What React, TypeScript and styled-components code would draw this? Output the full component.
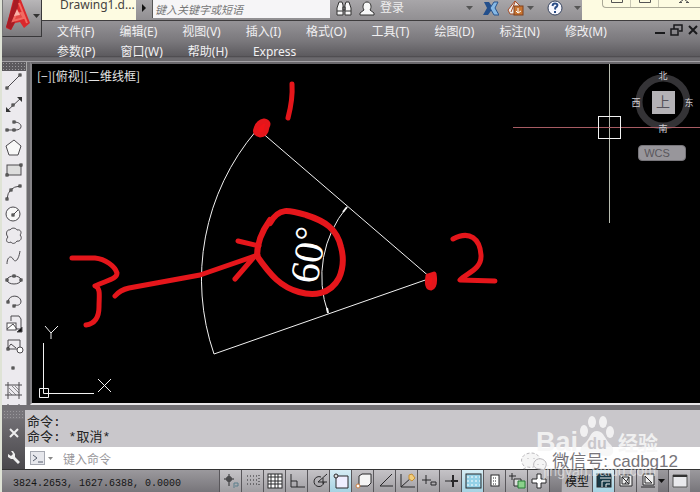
import React from "react";
import styled, { createGlobalStyle, css } from "styled-components";

const uiFont = `"Noto Sans", "Noto Sans CJK SC", sans-serif`;
const cjkFont = `"Noto Sans CJK SC", "Noto Sans", sans-serif`;

const GlobalStyle = createGlobalStyle`
  * { box-sizing: border-box; }
  body { margin: 0; background: #000; font-family: ${uiFont}; font-size: 12px; }
  button, input { font: inherit; color: inherit; margin: 0; padding: 0; border: 0; background: none; }
  svg { display: block; }
`;

const Window = styled.div`
  display: flex;
  flex-direction: column;
  height: 100vh;
  overflow: hidden;
  position: relative;
  background: #6d6b6f;
  border-left: 2px solid #dfe3d6;
`;

const Header = styled.header`
  display: grid;
  grid-template-columns: 40px 1fr;
  grid-template-rows: 21px 41px;
  flex: none;
`;

const AppButton = styled.button`
  grid-column: 1;
  grid-row: 1 / 3;
  align-self: start;
  height: 37px;
  z-index: 1;
  background: linear-gradient(#b8b6b8, #7b797c);
  border: 1px solid #39383a;
  border-top: 0;
  border-left-color: #777;
`;

const TitleBar = styled.div`
  grid-column: 2;
  grid-row: 1;
  display: flex;
  align-items: stretch;
  min-width: 0;
  background: linear-gradient(#a8a6a9, #918f92);
  border-bottom: 1px solid #3e3c3e;
`;

const FileTab = styled.div`
  width: 94px;
  flex: none;
  padding-left: 18px;
  background: #fdfbe1;
  color: #45423f;
  line-height: 9px;
  font-size: 12px;
  white-space: nowrap;
`;

const TitleButton = styled.button<{ $w: number }>`
  width: ${(p) => p.$w}px;
  flex: none;
  display: flex;
  align-items: center;
  justify-content: center;
  padding-bottom: 4px;
`;

const Search = styled.input`
  width: 178px;
  height: 18px;
  flex: none;
  padding: 0 2px;
  background: #f6f5f7;
  border-left: 1px solid #555;
  font-family: ${cjkFont};
  font-style: italic;
  font-size: 11px;
  &::placeholder { color: #777; opacity: 1; }
`;

const SignIn = styled.button`
  display: flex;
  align-items: center;
  gap: 5px;
  padding: 0 0 4px 2px;
  color: #eee;
  font-size: 12px;
  line-height: 16px;
  white-space: nowrap;
`;

const Fill = styled.div`
  flex: 1;
`;

const FrameCorner = styled.div`
  width: 118px;
  flex: none;
  padding-left: 20px;
  background: #fdfbe1;
`;

const FrameButtons = styled.div`
  display: flex;
  height: 8px;
  border: 1px solid #aaa896;
  border-top: 0;
  border-right: 0;
  border-radius: 0 0 0 4px;
`;

const FrameButton = styled.button<{ $wide?: boolean }>`
  width: ${(p) => (p.$wide ? 50 : 28)}px;
  flex: none;
  display: flex;
  justify-content: center;
  border-right: 1px solid #c9c7b4;
`;

const MenuBar = styled.div`
  grid-column: 1 / 3;
  grid-row: 2;
  display: flex;
  padding-left: 55px;
  background: linear-gradient(#959397, #7a787c 50%, #5c5a5e 88%, #4c4a4d 89%, #6b696d 92%);
  border-bottom: 1px solid #a4a2a6;
`;

const Menus = styled.nav`
  flex: 1;
  display: flex;
  flex-wrap: wrap;
  align-content: flex-start;
  column-gap: 25px;
`;

const MenuItem = styled.button`
  height: 20px;
  color: #f1f0f2;
  white-space: nowrap;
`;

const DocButtons = styled.div`
  display: flex;
  align-items: flex-start;
  padding-top: 3px;
  width: 46px;
  flex: none;
`;

const DocButton = styled.button`
  width: 16px;
  flex: none;
`;

const Work = styled.div`
  display: flex;
  flex: 1;
  min-height: 0;
`;

const ToolColumn = styled.div`
  width: 25px;
  flex: none;
  overflow: hidden;
  background: #eceaee;
  border-right: 1px solid #aaa;
`;

const Grip = styled.div`
  height: 9px;
  background-color: #5c5a5e;
  background-image: radial-gradient(#9a989c 1px, transparent 1px);
  background-size: 3px 3px;
`;

const Tool = styled.button`
  display: block;
  width: 100%;
  height: 22px;
`;

const Canvas = styled.main`
  flex: 1;
  position: relative;
  margin-left: 3px;
  background: #000;
  border: 2px solid #e8e6e8;
  border-top-color: #6a686c;
  border-left-color: #858387;
  border-right: 0;
  overflow: hidden;
`;

const Drawing = styled.svg`
  position: absolute;
  left: 0;
  top: 0;
`;

const ViewLabel = styled.div`
  position: absolute;
  left: 5px;
  top: 3px;
  color: #e4e4e4;
  font-family: ${cjkFont};
  font-size: 12px;
  line-height: 18px;
`;

const ViewCube = styled.div`
  position: absolute;
  right: 5px;
  top: 4px;
  width: 64px;
`;

const WcsButton = styled.button`
  display: block;
  width: 48px;
  height: 16px;
  margin: 11px 0 0 7px;
  padding-right: 10px;
  border-radius: 4px;
  border: 1px solid #77757a;
  background: #98969b;
  color: #58565c;
  font-family: "Liberation Sans", sans-serif;
  font-size: 11px;
  line-height: 12px;
`;

const Console = styled.section`
  display: flex;
  flex: none;
  height: 65px;
  border-top: 5px solid #737175;
  border-bottom: 1px solid #333;
`;

const ConsoleSide = styled.div`
  width: 23px;
  flex: none;
  display: flex;
  flex-direction: column;
  align-items: center;
  background: linear-gradient(#77757a, #4a484c);
`;

const SideButton = styled.button`
  height: 24px;
`;

const SideGrip = styled(Grip)`
  width: 21px;
  margin-bottom: 2px;
  background-color: #77757a;
`;

const ConsoleBody = styled.div`
  flex: 1;
  display: flex;
  flex-direction: column;
  background: #c9c7cb;
`;

const History = styled.div`
  flex: 1;
  padding: 5px 2px 0;
  color: #222;
  font-family: "Liberation Mono", "Noto Sans CJK SC", monospace;
  font-size: 13px;
  line-height: 15px;
`;

const HistoryLine = styled.div`
  height: 15px;
  white-space: pre;
`;

const Prompt = styled.label`
  display: flex;
  align-items: center;
  height: 22px;
  padding-left: 5px;
  gap: 9px;
  background: #fff;
`;

const CommandInput = styled.input`
  flex: 1;
  font-family: ${cjkFont};
  font-size: 12px;
  &::placeholder { color: #99979b; opacity: 1; }
`;

const StatusBar = styled.footer`
  display: flex;
  flex: none;
  height: 22px;
  background: linear-gradient(#9b999d, #77757a);
`;

const Coordinates = styled.div`
  width: 217px;
  flex: none;
  padding: 5px 0 0 11px;
  color: #151515;
  font-family: "Liberation Mono", monospace;
  font-size: 10px;
  line-height: 18px;
  white-space: pre;
`;

const Toggle = styled.button<{ $on?: boolean }>`
  width: 22px;
  flex: none;
  display: flex;
  justify-content: center;
  align-items: center;
  background: linear-gradient(#c5c3c7, #a09ea2);
  border-left: 1px solid #59575b;
  ${(p) => p.$on && css`background: linear-gradient(#d6edf5, #a6d2e2);`}
`;

const ModelGroup = styled.div`
  display: flex;
  flex: 1;
  border-left: 1px solid #59575b;
  padding-left: 11px;
`;

const ModelButton = styled.button`
  width: 31px;
  background: #b3b1b5;
  border-left: 1px solid #8a888c;
  color: #111;
  font-family: ${cjkFont};
  font-size: 12px;
  line-height: 20px;
`;

const CaretButton = styled.button`
  width: 10px;
`;

const Brand = styled.div`
  position: absolute;
  right: 42px;
  bottom: 38px;
  display: flex;
  align-items: flex-end;
  color: rgba(246, 246, 246, 0.88);
  pointer-events: none;
`;

const BrandLatin = styled.span`
  font-family: "Liberation Sans", sans-serif;
  font-size: 27px;
  font-weight: bold;
  line-height: 24px;
`;

const BrandPaw = styled.svg`
  margin-bottom: -4px;
`;

const BrandCjk = styled.span`
  padding-left: 3px;
  font-family: ${cjkFont};
  font-size: 20px;
  font-weight: bold;
  line-height: 22px;
`;

const BrandSite = styled.span`
  position: absolute;
  right: 44px;
  bottom: 13px;
  font-family: "Liberation Sans", sans-serif;
  font-size: 14px;
  line-height: 16px;
  color: rgba(235, 235, 235, 0.65);
  pointer-events: none;
`;

const Contact = styled.div`
  position: absolute;
  right: 22px;
  bottom: 20px;
  display: flex;
  align-items: center;
  gap: 5px;
  color: #77757a;
  font-family: "Liberation Sans", "Noto Sans CJK SC", sans-serif;
  font-size: 17px;
  line-height: 20px;
  text-shadow: -1px -1px #fff;
  pointer-events: none;
`;

const Caret = ({ color = "#555" }: { color?: string }) => (
  <svg width="7" height="5" viewBox="0 0 7 5"><path d="M0 0h7L3.5 4z" fill={color} /></svg>
);

const square = (x: number, y: number, r = 1) => (
  <rect x={x - r} y={y - r} width={2 * r} height={2 * r} fill="#fff" stroke="#222" strokeWidth="1" />
);

const tools: { name: string; art: React.ReactNode }[] = [
  { name: "直线", art: <><path d="M5 17L18 4" />{square(5, 17)}{square(18, 4)}</> },
  { name: "构造线", art: <><path d="M5 18L19 5" /><path d="M4 14v5h5zM15 4h5v5z" fill="#333" stroke="none" />{square(11, 12)}</> },
  { name: "多段线", art: <><path d="M5 15h9c7 0 7-8-2-8" />{square(5, 15)}{square(12, 15)}{square(12, 7)}</> },
  { name: "多边形", art: <path d="M12 3l7 6-3 9H7L4 9z" fill="#f8f8f8" /> },
  { name: "矩形", art: <><rect x="5" y="6" width="14" height="10" fill="#ddd" />{square(5, 16)}{square(19, 6)}</> },
  { name: "圆弧", art: <><path d="M5 18Q6 6 18 5" />{square(5, 18)}{square(9, 9)}{square(18, 5)}</> },
  { name: "圆", art: <><circle cx="11" cy="11" r="7" fill="#f7f7f7" /><path d="M11 12l5-5" />{square(11, 12)}</> },
  { name: "修订云线", art: <path d="M8 5c2-3 6-2 7 0 4-1 5 3 3 5 3 3 0 7-3 6-2 3-5 3-6 1-4 2-6-2-3-5-3-3-1-8 2-7z" /> },
  { name: "样条曲线", art: <path d="M5 17c0-7 4-9 6-5 3 5 6-1 7-8" /> },
  { name: "椭圆", art: <><ellipse cx="12" cy="11" rx="7" ry="4" />{square(5, 11)}{square(19, 11)}{square(12, 7)}</> },
  { name: "椭圆弧", art: <><path d="M6 10c2-7 12-6 13 0 0 3-2 5-6 4" />{square(6, 11)}{square(12, 15)}</> },
  { name: "插入块", art: <><path d="M9 8V3h8l2 3v10H9" /><rect x="5" y="10" width="9" height="7" fill="#fff" /><path d="M5 16l6-5 4 5" /><path d="M20 14v5h-5z" fill="#111" /></> },
  { name: "创建块", art: <><path d="M6 5h12v9H6z" /><path d="M5 14l4-5 5 4" /><circle cx="18" cy="15" r="3" fill="#fff" />{square(6, 14)}</> },
  { name: "点", art: square(11, 11) },
  { name: "图案填充", art: <><path d="M6 3v17M17 3v17M3 6h17M3 16h17" /><path d="M7 9l7 7M7 13l3 3M10 7l7 7M13 7l4 4" strokeWidth=".6" /></> },
  { name: "渐变色", art: <path d="M6 3v17M17 3v17M3 6h17" /> },
];

const toggles: { name: string; on?: boolean; art: React.ReactNode }[] = [
  { name: "推断约束", art: <><path d="M7 2v12M2 7h10M5 5h4v4H5z" /><path d="M12 16v-5h4v3h-3" stroke="#5b7f8c" /></> },
  { name: "捕捉模式", art: <path d="M3 4h10M3 8h10M3 12h10M15 3v12" strokeDasharray="1 2" /> },
  { name: "栅格显示", art: <><rect x="2" y="2" width="14" height="14" fill="#fff" /><path d="M2 5h14M2 9h14M2 12h14M5 2v14M9 2v14M12 2v14" /></> },
  { name: "正交模式", art: <path d="M3 2v13h14M3 9h6v6" /> },
  { name: "极轴追踪", art: <path d="M14 10a5 5 0 1 1-3-5M17 2L8 10h9M13 6v6" /> },
  { name: "对象捕捉", on: true, art: <><path d="M4 4h12v12H4z" fill="#eef" /><circle cx="4" cy="4" r="2" fill="#ddd" /></> },
  { name: "三维对象捕捉", art: <><path d="M5 4l3-2h9v9l-3 3H5z" fill="#f5f5f5" /><circle cx="4" cy="14" r="2" fill="#fff" stroke="#c87c40" /></> },
  { name: "对象捕捉追踪", art: <path d="M16 2L4 14h13" /> },
  { name: "动态 UCS", art: <><path d="M3 2v13h14M3 15L14 5" /><path d="M11 3l3-1 3 4-3 3-3-2z" fill="#f2cd7b" stroke="#c58e34" /></> },
  { name: "动态输入", art: <path d="M2 8h9M6 3v9M11 10h5v3h-5z" /> },
  { name: "线宽", art: <><path d="M3 9h13" /><path d="M9 9h7M11 3v12" strokeWidth="2" /></> },
  { name: "透明度", on: true, art: <><rect x="2" y="2" width="15" height="14" fill="#94d1e7" /><path d="M3 5h13M3 9h13M3 13h13" stroke="#fff" strokeDasharray="2 2" /></> },
  { name: "快捷特性", art: <><rect x="5" y="3" width="8" height="11" fill="#fff" /><path d="M7 6h4M7 9h4M7 12h4" strokeDasharray="1 1" /></> },
  { name: "选择循环", art: <><path d="M1 4h7M4 1v7" /><path d="M6 7h7v7H6z" fill="#ddd" /><path d="M10 9h7v7h-7z" fill="#8bd18b" stroke="#247b35" /></> },
  { name: "注释监视器", art: <path d="M7 2h4v5h5v4h-5v5H7v-5H2V7h5z" fill="#fff" /> },
];

const layouts: { name: string; on?: boolean; art: React.ReactNode }[] = [
  { name: "模型空间", on: true, art: <><rect x="2" y="2" width="14" height="13" fill="#173a47" /><path d="M5 6h11M7 15V9h8M11 15v-3h4" stroke="#eee" /></> },
  { name: "快速查看布局", art: <><path d="M3 3h12v11H3z" fill="#eee" /><path d="M5 5h7v7H5zM5 5l7 7M12 5L8 12" /></> },
  { name: "快速查看图形", art: <><path d="M4 2h11v11H4z" fill="#eee" /><path d="M2 15h14M6 4v7h7L6 4" /></> },
];

const frameButtons = ["最小化", "最大化", "关闭"];
const docButtons = ["最小化图形", "还原图形", "关闭图形"];
const menus = ["文件(F)", "编辑(E)", "视图(V)", "插入(I)", "格式(O)", "工具(T)", "绘图(D)", "标注(N)", "修改(M)", "参数(P)", "窗口(W)", "帮助(H)", "Express"];

function TopBar() {
  return (
    <Header>
      <AppButton aria-label="应用程序菜单">
        <svg width="38" height="36" viewBox="0 0 38 36">
          <path d="M10 0h8l9 23-6 5-4-6-5 1-4 7-5-2z" fill="#d9282c" />
          <path d="M11 0L3 27l5 3 4-8 4-22z" fill="#a81c24" />
          <path d="M16 3l8 20M10 21l3-7 5-1 3 5z" stroke="#f26b62" strokeWidth="2" fill="#e44945" />
          <path d="M14 9l3 6-6 1z" fill="#f9b3a8" />
          <path d="M30 14h7l-3.500 4z" fill="#333" />
        </svg>
      </AppButton>
      <TitleBar>
        <FileTab>Drawing1.d...</FileTab>
        <TitleButton $w={16} aria-label="展开">
          <svg width="6" height="8" viewBox="0 0 6 8"><path d="M1 0l4 4-4 4z" fill="#111" /></svg>
        </TitleButton>
        <Search aria-label="搜索" placeholder="键入关键字或短语" />
        <TitleButton $w={27} aria-label="查找">
          <svg width="16" height="15" viewBox="0 0 16 15" fill="#f8f8f8" stroke="#333">
            <path d="M3 1h3l1 3v10H1V7zM13 1h-3L9 4v10h6V7zM7 6h2v3H7zM1 10h6M9 10h6" />
          </svg>
        </TitleButton>
        <SignIn>
          <svg width="16" height="15" viewBox="0 0 16 15" fill="#f8f8f8" stroke="#333">
            <path d="M5 9C3 6 4 1 8 1s5 5 3 8l4 3v2H1v-2z" />
          </svg>
          登录
        </SignIn>
        <Fill />
        <TitleButton $w={9} aria-label="登录选项"><Caret /></TitleButton>
        <TitleButton $w={33} aria-label="Exchange">
          <svg width="16" height="15" viewBox="0 0 16 15">
            <path d="M1 1h5l4 6-5 7H0l4-7z" fill="#234f8c" /><path d="M15 1h-4L7 7l4 7h5l-4-7z" fill="#86b8e5" stroke="#28538b" />
          </svg>
        </TitleButton>
        <TitleButton $w={17} aria-label="Autodesk 360">
          <svg width="17" height="16" viewBox="0 0 17 16">
            <path d="M8 1l5 5-1 8H3l-2-4z" fill="#eee" stroke="#a64b25" /><path d="M8 2L4 12" stroke="#a64b25" />
            <rect x="7" y="6" width="9" height="9" fill="#c87532" stroke="#80411d" /><path d="M11 8v4M9 11l2 2 3-2" stroke="#fff" fill="none" />
          </svg>
        </TitleButton>
        <TitleButton $w={12} aria-label="360 选项"><Caret /></TitleButton>
        <TitleButton $w={37} aria-label="帮助">
          <svg width="16" height="16" viewBox="0 0 16 16">
            <circle cx="8" cy="8" r="7" fill="#f8f8ff" stroke="#34425e" />
            <path d="M5.500 6q.5-3 3-2.500c3 .5 2 3 0 4L8 9.500" fill="none" stroke="#294b85" strokeWidth="2" /><rect x="7" y="11" width="2" height="2" fill="#294b85" />
          </svg>
        </TitleButton>
        <TitleButton $w={9} aria-label="帮助选项"><Caret /></TitleButton>
        <FrameCorner>
          <FrameButtons>
            {frameButtons.map((name, i) => (
              <FrameButton key={name} $wide={i === 2} aria-label={name}>
                <svg width="12" height="3" viewBox="0 0 12 3" stroke="#555" fill="none">
                  {i === 2 ? <path d="M2 2l3-2M10 2L7 0M1 2.500h3M8 2.500h3" /> : <path d="M.5 0v2.500h11V0" />}
                </svg>
              </FrameButton>
            ))}
          </FrameButtons>
        </FrameCorner>
      </TitleBar>
      <MenuBar>
        <Menus>{menus.map((m) => <MenuItem key={m}>{m}</MenuItem>)}</Menus>
        <DocButtons>
          {docButtons.map((name, i) => (
            <DocButton key={name} aria-label={name}>
              <svg width="13" height="12" viewBox="0 0 13 12" stroke="#19191b" fill="none" strokeWidth="2">
                {i === 0 && <path d="M1 9h10" />}
                {i === 1 && <path d="M4 5V1h8v6H9M1 5h7v6H1z" strokeWidth="1.500" />}
                {i === 2 && <path d="M3 2l8 8M11 2l-8 8" />}
              </svg>
            </DocButton>
          ))}
        </DocButtons>
      </MenuBar>
    </Header>
  );
}

function DrawingArea() {
  return (
    <Canvas>
      <Drawing width="668" height="340" viewBox="32 64 668 340" fill="none" stroke="#f2f2f2">
        <path d="M256 131A229 229 0 0 0 214 354L431 278L260 131M347 207A109 109 0 0 0 328 313" />
        <path d="M343 212l4-5M327 308l1 5" strokeWidth="2" />
        <text transform="translate(317 285) rotate(-80)" fontFamily="Liberation Serif, serif" fontSize="41" fill="#fff" stroke="none">60<tspan dy="-6" fontSize="36">°</tspan></text>
        <path d="M43.500 343v50.500H94M39.500 388.500h9v9h-9zM45 326l6 7 7-7M51 333v6M98 379l13 13M111 379l-13 13" />
        <path d="M609.500 64v159" stroke="#b9bdb1" />
        <path d="M513 127.500h187" stroke="#a75c63" />
        <rect x="598.500" y="116.500" width="22" height="22" />
        <g stroke="#e5161b" strokeWidth="6" strokeLinecap="round" strokeLinejoin="round">
          <path d="M292 84Q293 99 288 118" strokeWidth="5" />
          <path d="M270 223C279 207 289 210 306 215C325 221 337 229 341 247C344 258 343 269 339 278C330 295 313 296 299 292C281 287 271 276 257 256C257 244 262 231 270 220" />
          <path d="M115 296Q120 290 129 288L200 275L258 255M238 241l21 5M235 279l19-22" strokeWidth="5" />
          <path d="M72 258h23c10 1 20 8 22 15 0 6-9 7-22 13 6 2 4 10 4 21q0 16-13 18" strokeWidth="5" />
          <path d="M453 239c17-9 27 0 28 16 1 14-14 18-21 25l35 1" strokeWidth="5" />
          <path d="M256 129q2-7 8-8 6 1 3 6-1 8-7 8-6-2-4-6M428 276l6-2q2 12-3 14-5 0-3-12" fill="#f01418" strokeWidth="5" />
        </g>
      </Drawing>
      <ViewLabel>[−][俯视][二维线框]</ViewLabel>
      <ViewCube>
        <svg width="64" height="66" viewBox="631 68 64 66">
          <circle cx="663" cy="102" r="24" fill="none" stroke="#343336" strokeWidth="7" />
          <path d="M631 127.500h64" stroke="#a75c63" />
          <rect x="652" y="91" width="23" height="23" fill="#b4b2b6" />
          <g fill="#d0ced2" fontFamily="Noto Sans CJK SC, sans-serif" fontSize="9" textAnchor="middle">
            <text x="663" y="79">北</text><text x="636" y="106">西</text><text x="689" y="106">东</text><text x="663" y="132">南</text>
            <text x="663" y="107" fontSize="14" fill="#55525a">上</text>
          </g>
        </svg>
        <WcsButton>WCS</WcsButton>
      </ViewCube>
    </Canvas>
  );
}

export default function App() {
  return (
    <Window>
      <GlobalStyle />
      <TopBar />
      <Work>
        <ToolColumn>
          <Grip />
          {tools.map((t) => (
            <Tool key={t.name} aria-label={t.name}>
              <svg width="24" height="22" viewBox="0 0 24 22" fill="none" stroke="#4c4a4e">{t.art}</svg>
            </Tool>
          ))}
        </ToolColumn>
        <DrawingArea />
      </Work>
      <Console>
        <ConsoleSide>
          <SideGrip />
          <SideButton aria-label="关闭命令行">
            <svg width="10" height="10" viewBox="0 0 10 10"><path d="M1 1l8 8M9 1L1 9" stroke="#eee" strokeWidth="2" /></svg>
          </SideButton>
          <SideButton aria-label="自定义">
            <svg width="14" height="14" viewBox="0 0 14 14"><path d="M4 1l2 3-2 2-3-2v3l3 2h2l5 5 2-2-5-5V4L6 1z" fill="#eee" /></svg>
          </SideButton>
        </ConsoleSide>
        <ConsoleBody>
          <History>
            <HistoryLine>命令:</HistoryLine>
            <HistoryLine>命令: *取消*</HistoryLine>
          </History>
          <Prompt>
            <svg width="24" height="14" viewBox="0 0 24 14">
              <rect x=".5" y=".5" width="14" height="13" fill="#e6e7ec" stroke="#a5a8b1" />
              <path d="M3 4l4 3-4 3M8 11h5" stroke="#555d6c" fill="none" /><path d="M18 6h5l-2.500 3z" fill="#888" />
            </svg>
            <CommandInput aria-label="命令" placeholder="键入命令" />
          </Prompt>
        </ConsoleBody>
      </Console>
      <StatusBar>
        <Coordinates>3824.2653, 1627.6388, 0.0000</Coordinates>
        {toggles.map((t) => (
          <Toggle key={t.name} $on={t.on} aria-label={t.name}>
            <svg width="18" height="18" viewBox="0 0 18 18" fill="none" stroke="#29282a">{t.art}</svg>
          </Toggle>
        ))}
        <ModelGroup>
          <ModelButton>模型</ModelButton>
          {layouts.map((t) => (
            <Toggle key={t.name} $on={t.on} aria-label={t.name}>
              <svg width="18" height="18" viewBox="0 0 18 18" fill="none" stroke="#29282a">{t.art}</svg>
            </Toggle>
          ))}
          <CaretButton aria-label="更多"><Caret color="#111" /></CaretButton>
          <Toggle aria-label="全屏显示">
            <svg width="16" height="16" viewBox="0 0 16 16"><path d="M1 2h14v12H1z" fill="#e9e9ec" stroke="#555" /><path d="M1 3h14" stroke="#333" strokeWidth="2" /></svg>
          </Toggle>
        </ModelGroup>
      </StatusBar>
      <Brand>
        <BrandLatin>Bai</BrandLatin>
        <BrandPaw width="37" height="43" viewBox="0 0 37 43" fill="currentColor">
          <ellipse cx="6" cy="16" rx="4" ry="6" /><ellipse cx="14" cy="7" rx="4" ry="6" /><ellipse cx="25" cy="7" rx="4" ry="6" /><ellipse cx="32" cy="17" rx="4" ry="6" />
          <path d="M19 16c7 0 8 9 14 14 5 6 1 13-6 11-5-1-11-1-16 0-8 2-12-6-5-12s6-13 13-13z" />
          <text x="19" y="34" textAnchor="middle" fontFamily="Liberation Sans, sans-serif" fontSize="16" fontWeight="bold" fill="#c9c7cb">du</text>
        </BrandPaw>
        <BrandCjk>经验</BrandCjk>
      </Brand>
      <BrandSite>jingyan.baidu.com</BrandSite>
      <Contact>
        <svg width="26" height="20" viewBox="0 0 26 20" fill="#f5f5f5" stroke="#b9b7bb">
          <path d="M3 14C-3 7 3 1 10 1s12 6 7 11-9 3-11 3l-3 2z" strokeDasharray="3 2" /><path d="M14 9c4-5 13-1 11 5l-2 4-4-1c-6 0-8-4-5-8z" />
          <path d="M7 6v1M13 6v1M17 12v1M22 12v1" />
        </svg>
        微信号: cadbg12
      </Contact>
    </Window>
  );
}
